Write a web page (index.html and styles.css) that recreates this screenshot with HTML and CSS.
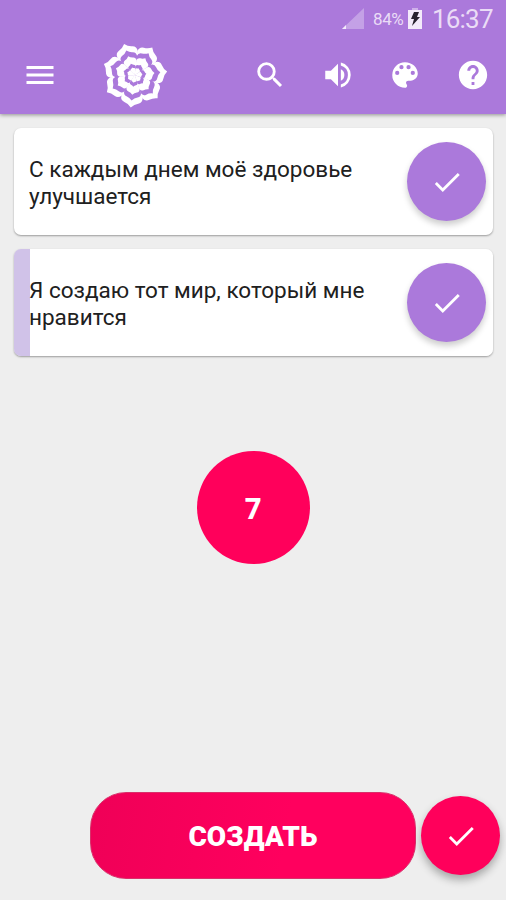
FILE: index.html
```html
<!DOCTYPE html>
<html lang="ru">
<head>
<meta charset="utf-8">
<title>Аффирмации</title>
<link rel="stylesheet" href="styles.css">
</head>
<body>
<header class="header">
  <div class="status">
    <svg class="signal" width="24" height="24" viewBox="0 0 24 24"><path d="M23 1v21H1z" fill="#fff" opacity=".3"/><path d="M5 18v4H1z" fill="#f3eafa"/></svg>
    <span class="percent">84%</span>
    <svg class="battery" width="16" height="24" viewBox="0 0 16 24"><path d="M5 1h6v2H5z" fill="#f3eafa" opacity=".5"/><path d="M1 3h14v19H1z" fill="#f3eafa"/><path d="M7 5h5l-2 5h3l-8 9 2-7H4z" fill="#28212f"/></svg>
    <span class="time">16:37</span>
  </div>
  <div class="toolbar">
    <svg class="menu" width="36" height="36" viewBox="0 0 24 24"><path d="M3 18h18v-2H3v2zm0-5h18v-2H3v2zm0-7v2h18V6H3z"/></svg>
    <svg class="logo" width="72" height="72" viewBox="0 0 216 216">
      <defs>
        <path id="petal" d="M-2 0L65 -32Q80 -34 84 -21Q87 -9 98 0Q87 9 84 21Q80 34 65 32z"/>
        <g id="flower">
          <use href="#petal"/>
          <use href="#petal" transform="rotate(51.43)"/>
          <use href="#petal" transform="rotate(102.86)"/>
          <use href="#petal" transform="rotate(154.29)"/>
          <use href="#petal" transform="rotate(205.71)"/>
          <use href="#petal" transform="rotate(257.14)"/>
          <use href="#petal" transform="rotate(308.57)"/>
        </g>
      </defs>
      <g transform="translate(104 108) rotate(-6)">
        <use href="#flower"/>
        <use class="gap" href="#flower" transform="scale(.79)"/>
        <use href="#flower" transform="scale(.61)"/>
        <use class="gap" href="#flower" transform="scale(.36)"/>
        <use href="#flower" transform="scale(.24)"/>
      </g>
    </svg>
    <div class="actions">
      <svg viewBox="0 0 24 24"><path d="M15.5 14h-.79l-.28-.27A6.47 6.47 0 0 0 16 9.5 6.5 6.5 0 1 0 9.5 16c1.61 0 3.09-.59 4.23-1.57l.27.28v.79l5 4.99L20.49 19l-4.99-5zm-6 0a4.5 4.5 0 1 1 0-9 4.5 4.5 0 0 1 0 9z"/></svg>
      <svg viewBox="0 0 24 24"><path d="M3 9v6h4l5 5V4L7 9H3zm13.5 3A4.5 4.5 0 0 0 14 7.97v8.05A4.47 4.47 0 0 0 16.500 12zM14 3.230v2.060a7 7 0 0 1 0 13.420v2.060a9 9 0 0 0 0-17.540z"/></svg>
      <svg viewBox="0 0 24 24"><path d="M12 3a9 9 0 0 0 0 18c.83 0 1.500-.67 1.500-1.500 0-.39-.15-.74-.39-1.010-.23-.26-.38-.61-.38-.99 0-.83.67-1.500 1.500-1.500H16c2.760 0 5-2.240 5-5 0-4.420-4.030-8-9-8zm-5.500 9a1.500 1.500 0 1 1 0-3 1.500 1.500 0 0 1 0 3zm3-4a1.500 1.500 0 1 1 0-3 1.500 1.500 0 0 1 0 3zm5 0a1.500 1.500 0 1 1 0-3 1.500 1.500 0 0 1 0 3zm3 4a1.500 1.500 0 1 1 0-3 1.500 1.500 0 0 1 0 3z"/></svg>
      <svg viewBox="0 0 24 24"><path d="M12 2C6.480 2 2 6.480 2 12s4.480 10 10 10 10-4.480 10-10S17.520 2 12 2zm1 17h-2v-2h2v2zm2.070-7.750l-.9.920C13.450 12.900 13 13.500 13 15h-2v-.5c0-1.100.45-2.100 1.170-2.830l1.240-1.260c.37-.36.59-.86.59-1.410 0-1.100-.9-2-2-2s-2 .9-2 2H8c0-2.210 1.790-4 4-4s4 1.790 4 4c0 .88-.36 1.680-.93 2.250z"/></svg>
    </div>
  </div>
</header>
<main class="cards">
  <article class="card">
    <p>С каждым днем моё здоровье<br>улучшается</p>
    <button class="round" aria-label="Готово"><svg viewBox="0 0 24 24"><path d="M9 16.170L4.830 12l-1.420 1.410L9 19 21 7l-1.410-1.410z"/></svg></button>
  </article>
  <article class="card marked">
    <p>Я создаю тот мир, который мне<br>нравится</p>
    <button class="round" aria-label="Готово"><svg viewBox="0 0 24 24"><path d="M9 16.170L4.830 12l-1.420 1.410L9 19 21 7l-1.410-1.410z"/></svg></button>
  </article>
</main>
<section class="counter-area"><div class="counter">7</div></section>
<footer class="footer">
  <button class="create">СОЗДАТЬ</button>
  <button class="round pink" aria-label="Готово"><svg viewBox="0 0 24 24"><path d="M9 16.170L4.830 12l-1.420 1.410L9 19 21 7l-1.410-1.410z"/></svg></button>
</footer>
</body>
</html>
```
FILE: styles.css
```css
* { box-sizing: border-box; }
body {
  margin: 0;
  height: 900px;
  display: flex;
  flex-direction: column;
  overflow: hidden;
  background: #eee;
  font-family: Roboto, sans-serif;
}
svg { display: block; fill: #fff; flex: none; }
button { border: 0; padding: 0; font-family: inherit; }
.header {
  height: 114px;
  flex: none;
  background: #ab79db;
  box-shadow: 0 1px 4px rgba(0, 0, 0, .4);
}
.status {
  height: 35px;
  display: flex;
  align-items: center;
  justify-content: flex-end;
  padding: 2px 13px 0 0;
  color: #eadcf6;
}
.signal { margin: 0 8px 0 0; }
.percent { width: 34px; font-size: 17px; letter-spacing: -.4px; }
.battery { margin-right: 9px; }
.time { width: 61px; font-size: 26px; letter-spacing: -.8px; line-height: 34px; }
.toolbar {
  height: 79px;
  display: flex;
  align-items: center;
  padding: 0 16px 0 22px;
}
.logo { margin-left: 42px; }
.gap { fill: #ab79db; }
.actions { display: flex; gap: 33.7px; margin-left: auto; }
.actions svg { width: 34px; height: 34px; }
.cards {
  padding: 14px 13px 0 14px;
  display: flex;
  flex-direction: column;
  gap: 14px;
}
.card {
  height: 107px;
  display: flex;
  justify-content: space-between;
  align-items: center;
  padding: 0 7px 0 15px;
  border-radius: 7px;
  background: #fff;
  box-shadow: 0 1px 2px rgba(0, 0, 0, .35);
}
.marked { background: linear-gradient(90deg, #d0c2e8 16px, #fff 16px); }
.card p {
  margin: 2px 0 0;
  color: #202020;
  font-size: 22.5px;
  line-height: 27px;
  white-space: nowrap;
}
.round {
  width: 79px;
  height: 79px;
  flex: none;
  display: grid;
  place-items: center;
  border-radius: 50%;
  background: #ab79db;
  box-shadow: 0 4px 6px rgba(0, 0, 0, .2);
}
.round svg { width: 34px; height: 34px; }
.counter-area { padding-top: 95px; display: flex; justify-content: center; }
.counter {
  width: 113px;
  height: 113px;
  display: grid;
  place-items: center;
  border-radius: 50%;
  background: #ff005b;
  color: #fff;
  font: 700 29px "Open Sans", sans-serif;
}
.footer {
  margin-top: auto;
  padding: 0 6px 21px 90px;
  display: flex;
  align-items: center;
  justify-content: space-between;
}
.create {
  width: 326px;
  height: 87px;
  padding-top: 2px;
  border-radius: 36px;
  border: 1px solid #d9306a;
  background: linear-gradient(100deg, #ef0057, #ff005e 60%);
  color: #fff;
  font-size: 28px;
  font-weight: 900;
}
.pink { background: #ff005b; box-shadow: 0 5px 8px rgba(0, 0, 0, .3); }
```
